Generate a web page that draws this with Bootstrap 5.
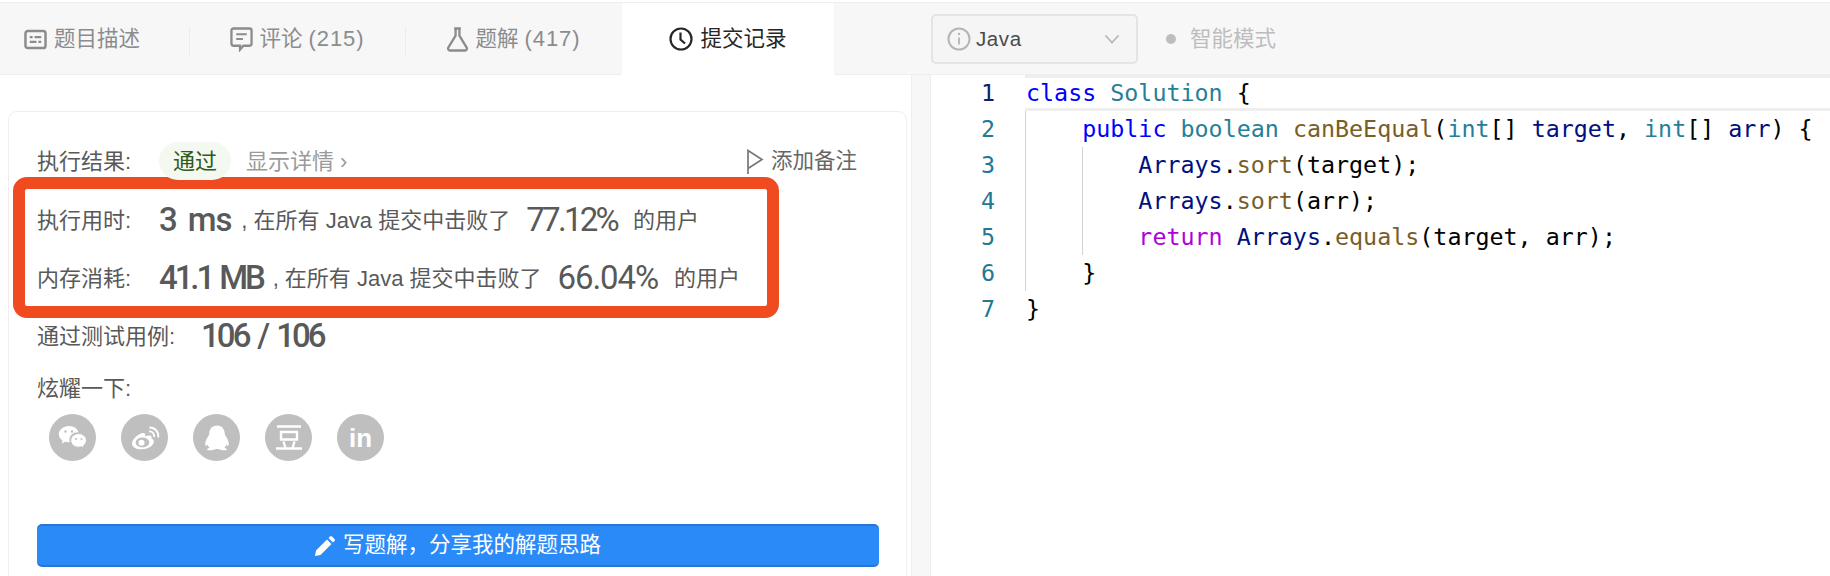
<!DOCTYPE html>
<html lang="zh">
<head>
<meta charset="utf-8">
<title>提交记录</title>
<link href="https://cdn.jsdelivr.net/npm/bootstrap@5.3.0/dist/css/bootstrap.min.css" rel="stylesheet">
<style>
html,body{height:576px;overflow:hidden;background:#fff}
body{font-family:"Liberation Sans","Noto Sans CJK SC",sans-serif;color:#595959;font-size:22px}
.topbar{height:73px;margin-top:2px;background:#f7f7f7;border-top:1px solid #eee;border-bottom:1px solid #eee}
.tabs-zone{width:931px}
.tabx{height:72px;font-size:21.5px;color:#8c8c8c;gap:7px;white-space:nowrap}
.tabx svg{flex:none}
.tabx-first{width:189px;padding-left:24px;justify-content:flex-start}
.tabx-mid{width:216px;justify-content:center}
.tabx-mid::before{content:"";position:absolute;left:0;top:24px;height:29px;border-left:1px solid #ececec}
.tabx-active{width:212px;margin-left:1px;background:#fff;color:#262626;justify-content:center;position:relative}
.tabcount{font-size:22px;letter-spacing:.9px}
.lang-box{width:207px;height:50px;margin-top:11px;border:2px solid #e4e4e4;border-radius:5px;background:#f5f5f5;padding:0 16px 0 14px;color:#4a4a4a;font-size:20.5px}
.lang-name{letter-spacing:.6px;margin-left:5px}
.smart{margin-left:28px;color:#bdbdbd;font-size:21.5px;gap:14px;height:72px}
.smart i{display:block;width:10px;height:10px;border-radius:50%;background:#bdbdbd}
.left-zone{width:911px;height:501px;padding:36px 4px 0 8px}
.split{width:20px;height:501px;background:#f7f7f7;border-left:1px solid #eee;border-right:1px solid #eee}
.result-card{height:480px;border:1px solid #efefef;border-radius:9px;padding:30px 49px 0 4px}
.res-row{padding-left:24px;height:38px}
.res-label{white-space:nowrap;width:122px;flex:none}
.pill{width:72px;height:38px;border-radius:19px;background:#f3f8f0;color:#2f5a22;display:flex;align-items:center;justify-content:center;flex:none}
.detail{margin-left:15px;color:#9a9a9a}
.note{gap:7px;color:#666;font-size:21.5px}
.red-frame{margin-top:-3px;width:766px;height:141px;border:12px solid #f04a20;border-radius:14px;padding:0 0 0 12px}
.stat-row{height:58px;white-space:nowrap}
.stat-row:first-child{margin-top:2px}
.lbl{width:122px;flex:none}
.num{font-family:"Roboto","Liberation Sans",sans-serif;font-weight:500;font-size:33px;color:#595959;letter-spacing:-1.1px;word-spacing:4px;margin-right:10px}
.num-tight{letter-spacing:-3.1px;word-spacing:2px}
.pct{font-family:"Roboto","Liberation Sans",sans-serif;font-weight:400;font-size:33px;color:#595959;letter-spacing:-1.1px;margin:0 16px}
.pct-tight{letter-spacing:-2.7px}
.tests{padding-left:24px;height:36px;white-space:nowrap}
.tests .lbl{width:164px}
.tests .num{letter-spacing:-2.9px;word-spacing:3.5px}
.brag{padding-left:24px;margin-top:22px;line-height:26px}
.soc{padding-left:36px;margin-top:12px;gap:25px}
.soc-dot{width:47px;height:47px;border-radius:50%;background:#bfbfbf;color:#fff;flex:none;overflow:hidden}
.soc-in{font-weight:700;font-size:26px;line-height:1}
.write-btn{display:flex;align-items:center;justify-content:center;gap:8px;margin:63px 0 0 24px;width:842px;height:43px;background:#2a8af8;border:0;border-top:2px solid #2676d6;border-bottom:2px solid #2676d6;border-radius:5px;color:#fff;font-size:21.5px;padding:0}
.write-btn:hover{background:#2a8af8;color:#fff}
.code-zone{height:501px;font-family:"DejaVu Sans Mono",monospace;font-size:23.33px;color:#000}
.gut{width:64px;text-align:right;color:#237893;flex:none}
.ln{height:36px;line-height:36px}
.ln-cur{color:#0b216f}
.codes{padding-left:31px;flex:1;min-width:0}
.cl{height:36px;line-height:36px;white-space:pre;margin-left:-1px;padding-left:1px}
.cl-cur{box-shadow:inset 0 3px 0 #eee,inset 0 -3px 0 #eee}
.guide{box-shadow:inset 1px 0 0 #d3d3d3}
.guide2{position:relative}
.guide2::before{content:"";position:absolute;left:57px;top:0;bottom:0;border-left:1px solid #d3d3d3}
.k{color:#0000ff}.t{color:#267f99}.f{color:#795e26}.v{color:#001080}.r{color:#af00db}
</style>
</head>
<body>
<div class="topbar d-flex">
  <div class="tabs-zone d-flex">
    <div class="tabx tabx-first d-flex align-items-center">
      <svg width="23" height="21" viewBox="0 0 24 22" fill="none" stroke="#8c8c8c"><rect x="1.5" y="2" width="21" height="18" rx="2.5" stroke-width="2.6"/><path d="M6 8.500h3M11 8.500h7M6 13.500h7M15 13.500h3" stroke-width="2.200"/></svg>
      <span>题目描述</span>
    </div>
    <div class="tabx tabx-mid d-flex align-items-center position-relative">
      <svg width="23" height="25" viewBox="0 0 24 26" fill="none" stroke="#8c8c8c"><path d="M3.500 1.500h17a2 2 0 0 1 2 2v14a2 2 0 0 1-2 2h-6.500l-3.500 4v-4h-7a2 2 0 0 1-2-2v-14a2 2 0 0 1 2-2z" stroke-width="2.400"/><path d="M6.500 7.500h11M6.500 12.500h7" stroke-width="2.200"/></svg>
      <span>评论 <span class="tabcount">(215)</span></span>
    </div>
    <div class="tabx tabx-mid d-flex align-items-center position-relative">
      <svg width="23" height="25" viewBox="0 0 24 26" fill="none" stroke="#8c8c8c"><path d="M8.500 1.500h7M10 1.500v7.500l-7.600 12.500a2 2 0 0 0 1.700 3h15.800a2 2 0 0 0 1.700-3L14 9V1.500" stroke-width="2.400" stroke-linejoin="round"/></svg>
      <span>题解 <span class="tabcount">(417)</span></span>
    </div>
    <div class="tabx tabx-active d-flex align-items-center">
      <svg width="24" height="24" viewBox="0 0 24 24" fill="none" stroke="#262626"><circle cx="12" cy="12" r="10.500" stroke-width="2.200"/><path d="M11.500 5.500v7l4.500 4" stroke-width="2.200"/></svg>
      <span>提交记录</span>
    </div>
  </div>
  <div class="lang-box d-flex align-items-center">
    <svg width="24" height="24" viewBox="0 0 24 24" fill="none" stroke="#b5b5b5"><circle cx="12" cy="12" r="10.500" stroke-width="2"/><path d="M12 10.500v7" stroke-width="1.800"/><circle cx="12" cy="7" r="1.200" fill="#b5b5b5" stroke="none"/></svg>
    <span class="lang-name">Java</span>
    <svg class="ms-auto" width="16" height="10" viewBox="0 0 16 10" fill="none" stroke="#b5b5b5" stroke-width="1.600"><path d="M1.500 1.500L8 8.500l6.500-7"/></svg>
  </div>
  <div class="smart d-flex align-items-center"><i></i><span>智能模式</span></div>
</div>
<div class="d-flex">
  <div class="left-zone flex-none">
    <div class="result-card">
      <div class="res-row d-flex align-items-center">
        <span class="res-label">执行结果:</span>
        <span class="pill">通过</span>
        <span class="detail">显示详情 ›</span>
        <span class="note d-flex align-items-center ms-auto">
          <svg width="18" height="25" viewBox="0 0 18 25" fill="none" stroke="#777" stroke-width="1.700"><path d="M2 25V1.500l14 9-14 9"/></svg>
          <span>添加备注</span>
        </span>
      </div>
      <div class="red-frame">
        <div class="stat-row d-flex align-items-center"><span class="lbl">执行用时:</span><span class="num">3 ms</span><span>, 在所有 Java 提交中击败了</span><span class="pct pct-tight">77.12%</span><span>的用户</span></div>
        <div class="stat-row d-flex align-items-center"><span class="lbl">内存消耗:</span><span class="num num-tight">41.1 MB</span><span>, 在所有 Java 提交中击败了</span><span class="pct">66.04%</span><span>的用户</span></div>
      </div>
      <div class="tests d-flex align-items-center"><span class="lbl">通过测试用例:</span><span class="num">106 / 106</span></div>
      <div class="brag">炫耀一下:</div>
      <div class="soc d-flex">
        <div class="soc-dot d-flex align-items-center justify-content-center">
          <svg width="29" height="26" viewBox="0 0 29 26" fill="#fff"><path d="M11 1C5.200 1 .8 4.700.8 9.200c0 2.600 1.400 4.700 3.800 6.300l-1 3 3.500-1.800c1.200.3 2.400.5 3.900.5h.8c-.3-.8-.4-1.600-.4-2.400 0-4.200 3.700-7.600 8.300-7.600h.8C19.600 3.900 15.700 1 11 1z"/><path d="M28.400 15.400c0-3.700-3.600-6.800-7.800-6.800-4.400 0-7.900 3.100-7.900 6.800s3.500 6.800 7.900 6.800c.9 0 1.800-.2 2.800-.4l2.600 1.500-.7-2.400c1.900-1.500 3.100-3.400 3.100-5.500z" stroke="#bfbfbf" stroke-width="1"/><circle cx="7.500" cy="6.500" r="1.200" fill="#bfbfbf"/><circle cx="14" cy="6.500" r="1.200" fill="#bfbfbf"/><circle cx="18" cy="14" r="1" fill="#bfbfbf"/><circle cx="23.500" cy="14" r="1" fill="#bfbfbf"/></svg>
        </div>
        <div class="soc-dot d-flex align-items-center justify-content-center">
          <svg width="30" height="26" viewBox="0 0 30 26"><path d="M19 10.500c2-.4 3.300.7 2.400 3 4 1.300 2.900 5.700-1 8.300-4.500 3-12.200 3.500-16.200.6-3.300-2.400-2.700-6.500 1-10 3.700-3.700 8-5.400 9.600-3.900.8.800.6 2.100.2 3 1.500-.6 2.900-1 4-1z" fill="#fff"/><ellipse cx="12.500" cy="17.500" rx="6.800" ry="5" fill="#bfbfbf"/><circle cx="11.500" cy="17.800" r="3" fill="#fff"/><path d="M19 6.500a4.500 4.500 0 0 1 5 5.500M19.500 2.500a8.500 8.500 0 0 1 8.700 10" fill="none" stroke="#fff" stroke-width="1.800"/></svg>
        </div>
        <div class="soc-dot d-flex align-items-center justify-content-center">
          <svg width="28" height="26" viewBox="0 0 28 26"><path d="M14 .5c-5 0-7.500 3.700-7.700 7.500 0 1-.1 1.800-.6 2.600-1.800 2.800-3.900 6-3.400 9.500.2 1.200 1.100 1 2.300-.5.3 1.300 1.100 2.300 2 3.100-1.800.5-2.900 1.200-2.500 2 .5.700 3.300.6 5.800.3 1.700-.4 2.700-1 4.100-1s2.400.6 4.100 1c2.500.3 5.300.4 5.800-.3.4-.8-.7-1.500-2.500-2 .9-.8 1.700-1.800 2-3.100 1.200 1.500 2.100 1.700 2.300.5.500-3.500-1.600-6.700-3.400-9.500-.5-.8-.6-1.600-.6-2.600C21.500 4.200 19 .5 14 .5z" fill="#fff"/></svg>
        </div>
        <div class="soc-dot d-flex align-items-center justify-content-center">
          <svg width="26" height="25" viewBox="0 0 26 25" fill="none" stroke="#fff" stroke-width="2.400"><path d="M1 1.500h24M5 7h16v7.500H5zM7.500 16.500l1.800 6M18.500 16.500l-1.800 6M0 23.500h26"/></svg>
        </div>
        <div class="soc-dot d-flex align-items-center justify-content-center soc-in">in</div>
      </div>
      <button class="btn write-btn" type="button">
        <svg width="20" height="20" viewBox="0 0 20 20" fill="#fff"><path d="M0 20l1-5.500L12 3.500l4.500 4.500L5.500 19zM13.500 2l1.500-1.500a1.500 1.500 0 0 1 2 0l2.500 2.500a1.500 1.500 0 0 1 0 2L18 6.500z"/></svg>
        <span>写题解&#xFF0C;分享我的解题思路</span>
      </button>
    </div>
  </div>
  <div class="split flex-none"></div>
  <div class="code-zone d-flex flex-grow-1">
    <div class="gut">
      <div class="ln ln-cur">1</div><div class="ln">2</div><div class="ln">3</div><div class="ln">4</div><div class="ln">5</div><div class="ln">6</div><div class="ln">7</div>
    </div>
    <div class="codes">
      <div class="cl cl-cur"><span class="k">class</span> <span class="t">Solution</span> {</div>
      <div class="cl guide">    <span class="k">public</span> <span class="t">boolean</span> <span class="f">canBeEqual</span>(<span class="t">int</span>[] <span class="v">target</span>, <span class="t">int</span>[] <span class="v">arr</span>) {</div>
      <div class="cl guide guide2">        <span class="v">Arrays</span>.<span class="f">sort</span>(target);</div>
      <div class="cl guide guide2">        <span class="v">Arrays</span>.<span class="f">sort</span>(arr);</div>
      <div class="cl guide guide2">        <span class="r">return</span> <span class="v">Arrays</span>.<span class="f">equals</span>(target, arr);</div>
      <div class="cl guide">    }</div>
      <div class="cl">}</div>
    </div>
  </div>
</div>
<script src="https://cdn.jsdelivr.net/npm/bootstrap@5.3.0/dist/js/bootstrap.bundle.min.js"></script>
</body>
</html>
